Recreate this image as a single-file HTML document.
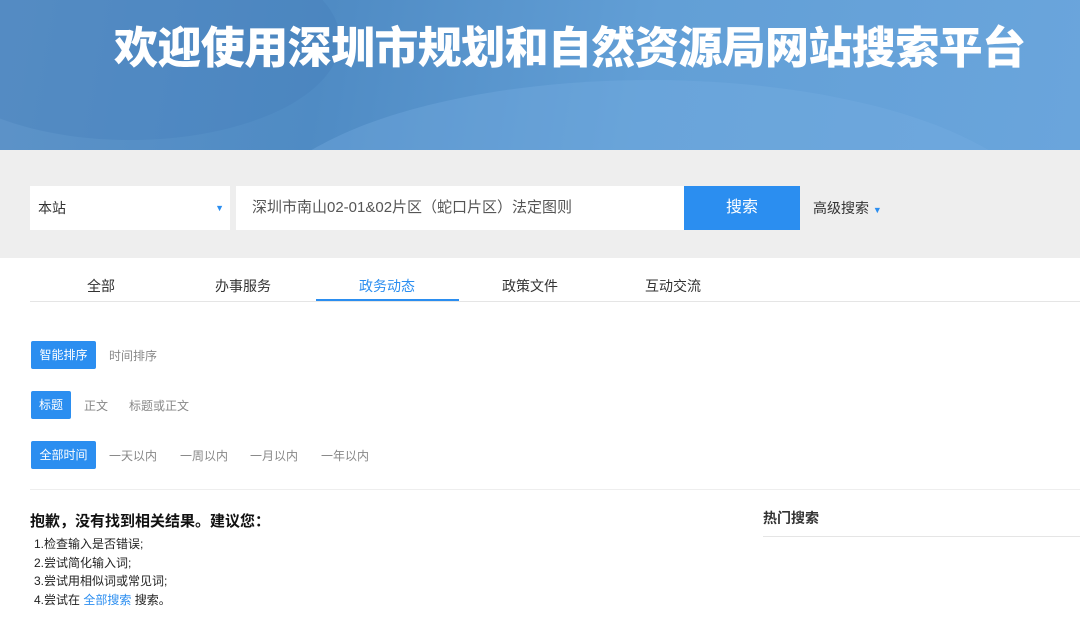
<!DOCTYPE html>
<html><head><meta charset="utf-8"><style>
*{margin:0;padding:0;box-sizing:border-box}
body{width:1080px;height:617px;overflow:hidden;background:#fff;font-family:"Liberation Sans","Noto Sans CJK SC",sans-serif;position:relative}
.ban{position:absolute;left:0;top:0;width:1080px;height:150px;background:linear-gradient(100deg,#5d93c8 0%,#4f8bc4 30%,#629fd6 60%,#6aa5dc 100%);overflow:hidden}
.ban h1{position:absolute;left:114px;top:14px;font-size:44px;line-height:60px;color:#fff;font-weight:900;letter-spacing:-0.6px;font-family:"Noto Sans CJK SC",sans-serif;white-space:nowrap}
.bar{position:absolute;top:150px;left:0;width:1080px;height:108px;background:#eeeeee}
.abs{position:absolute}
.g{color:#888;font-size:12px}
.btn{position:absolute;background:#2b8ef0;color:#fff;font-size:12px;border-radius:2px;text-align:center;line-height:28px;height:28px}
</style></head><body>
<div class="ban">
<div class="abs" style="left:-80px;top:-60px;width:420px;height:200px;border-radius:50%;background:rgba(70,125,185,.35)"></div>
<div class="abs" style="left:250px;top:80px;width:800px;height:300px;border-radius:50%;background:rgba(120,175,225,.35)"></div>
<h1>欢迎使用深圳市规划和自然资源局网站搜索平台</h1>
</div>
<div class="bar">
<div class="abs" style="left:30px;top:36px;width:200px;height:44px;background:#fff;font-size:14px;line-height:44px;padding-left:8px;color:#333">本站<span style="position:absolute;right:6px;top:0;color:#2b8ef0;font-size:9px">▼</span></div>
<div class="abs" style="left:236px;top:36px;width:448px;height:44px;background:#fff;font-size:15px;line-height:44px;padding-left:16px;color:#555">深圳市南山02-01&amp;02片区（蛇口片区）法定图则</div>
<div class="abs" style="left:684px;top:36px;width:116px;height:44px;background:#2b8ef0;color:#fff;font-size:16px;line-height:44px;text-align:center">搜索</div>
<div class="abs" style="left:813px;top:36px;font-size:14px;line-height:44px;color:#333">高级搜索 <span style="color:#2b8ef0;font-size:9px">▼</span></div>
</div>
<div class="abs" style="left:30px;top:301px;width:1050px;height:1px;background:#e5e5e5"></div>
<div class="abs" style="left:316px;top:299px;width:143px;height:2px;background:#2b8ef0"></div>
<div class="abs" style="top:276px;font-size:14px;color:#333;left:87px">全部</div>
<div class="abs" style="top:276px;font-size:14px;color:#333;left:215px">办事服务</div>
<div class="abs" style="top:276px;font-size:14px;color:#2b8ef0;left:359px">政务动态</div>
<div class="abs" style="top:276px;font-size:14px;color:#333;left:502px">政策文件</div>
<div class="abs" style="top:276px;font-size:14px;color:#333;left:645px">互动交流</div>
<div class="btn" style="left:31px;top:341px;width:65px">智能排序</div>
<div class="abs g" style="left:109px;top:347px">时间排序</div>
<div class="btn" style="left:31px;top:391px;width:40px">标题</div>
<div class="abs g" style="left:84px;top:397px">正文</div>
<div class="abs g" style="left:129px;top:397px">标题或正文</div>
<div class="btn" style="left:31px;top:441px;width:65px">全部时间</div>
<div class="abs g" style="left:109px;top:447px">一天以内</div>
<div class="abs g" style="left:180px;top:447px">一周以内</div>
<div class="abs g" style="left:250px;top:447px">一月以内</div>
<div class="abs g" style="left:321px;top:447px">一年以内</div>
<div class="abs" style="left:30px;top:489px;width:1050px;height:1px;background:#eee"></div>
<div class="abs" style="left:30px;top:510px;font-size:15px;font-weight:bold;color:#111">抱歉，没有找到相关结果。建议您：</div>
<div class="abs" style="left:34px;top:535px;font-size:12px;line-height:18.5px;color:#222">1.检查输入是否错误;<br>2.尝试简化输入词;<br>3.尝试用相似词或常见词;<br>4.尝试在 <span style="color:#2b8ef0">全部搜索</span> 搜索。</div>
<div class="abs" style="left:763px;top:508px;font-size:14px;font-weight:bold;color:#333">热门搜索</div>
<div class="abs" style="left:763px;top:536px;width:317px;height:1px;background:#e5e5e5"></div>
</body></html>
